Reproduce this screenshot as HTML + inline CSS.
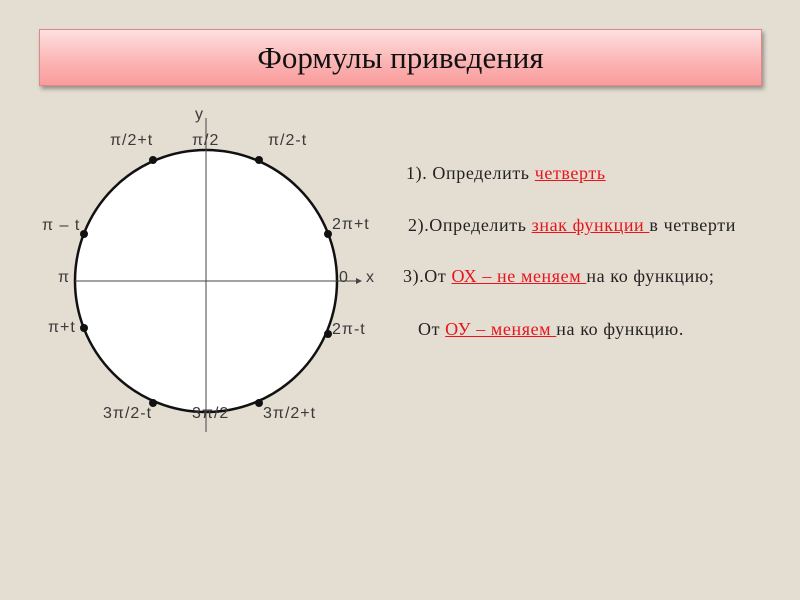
<!DOCTYPE html>
<html><head><meta charset="utf-8"><style>
body{margin:0;width:800px;height:600px;background:#e4ddd2;position:relative;overflow:hidden;font-family:"Liberation Sans",sans-serif}
.title{position:absolute;left:39px;top:29px;width:721px;height:55px;background:linear-gradient(#fde0e0,#fbb3b3 60%,#f99c9c);border:1px solid #d88;box-shadow:2px 3px 4px rgba(0,0,0,.35);text-align:center;font:31px/55px "Liberation Serif",serif;color:#111}
.l{position:absolute;font-size:16px;letter-spacing:1px;color:#3a3a3a;line-height:18px;white-space:nowrap}
.t{position:absolute;font:18px "Liberation Serif",serif;letter-spacing:0.6px;color:#222;white-space:nowrap;line-height:20px}
.r{color:#e8141c;text-decoration:underline}
</style></head><body>
<div class="title">Формулы приведения</div>
<svg width="800" height="600" style="position:absolute;left:0;top:0">
<circle cx="206" cy="281" r="131" fill="#fff" stroke="#111" stroke-width="2.5"/>
<line x1="206" y1="118" x2="206" y2="432" stroke="#444" stroke-width="1"/>
<line x1="75" y1="281" x2="360" y2="281" stroke="#444" stroke-width="1"/>
<path d="M356 278 L362 281 L356 284" fill="#444"/>
<g fill="#111">
<circle cx="153" cy="160" r="4"/><circle cx="259" cy="160" r="4"/>
<circle cx="84" cy="234" r="4"/><circle cx="328" cy="234" r="4"/>
<circle cx="84" cy="328" r="4"/><circle cx="328" cy="334" r="4"/>
<circle cx="153" cy="403" r="4"/><circle cx="259" cy="403" r="4"/>
</g></svg>
<div class="l" style="left:195px;top:106px">y</div>
<div class="l" style="left:110px;top:132px">π/2+t</div>
<div class="l" style="left:192px;top:132px">π/2</div>
<div class="l" style="left:268px;top:132px">π/2-t</div>
<div class="l" style="left:42px;top:217px">π – t</div>
<div class="l" style="left:332px;top:216px">2π+t</div>
<div class="l" style="left:58px;top:269px">π</div>
<div class="l" style="left:339px;top:269px">0</div>
<div class="l" style="left:366px;top:269px">x</div>
<div class="l" style="left:48px;top:319px">π+t</div>
<div class="l" style="left:332px;top:321px">2π-t</div>
<div class="l" style="left:103px;top:405px">3π/2-t</div>
<div class="l" style="left:192px;top:405px">3π/2</div>
<div class="l" style="left:263px;top:405px">3π/2+t</div>
<div class="t" style="left:406px;top:163px">1). Определить <span class="r">четверть</span></div>
<div class="t" style="left:408px;top:215px">2).Определить <span class="r">знак функции </span>в четверти</div>
<div class="t" style="left:403px;top:266px">3).От <span class="r">ОХ – не меняем </span>на ко функцию;</div>
<div class="t" style="left:418px;top:319px">От <span class="r">ОУ – меняем </span>на ко функцию.</div>
</body></html>
